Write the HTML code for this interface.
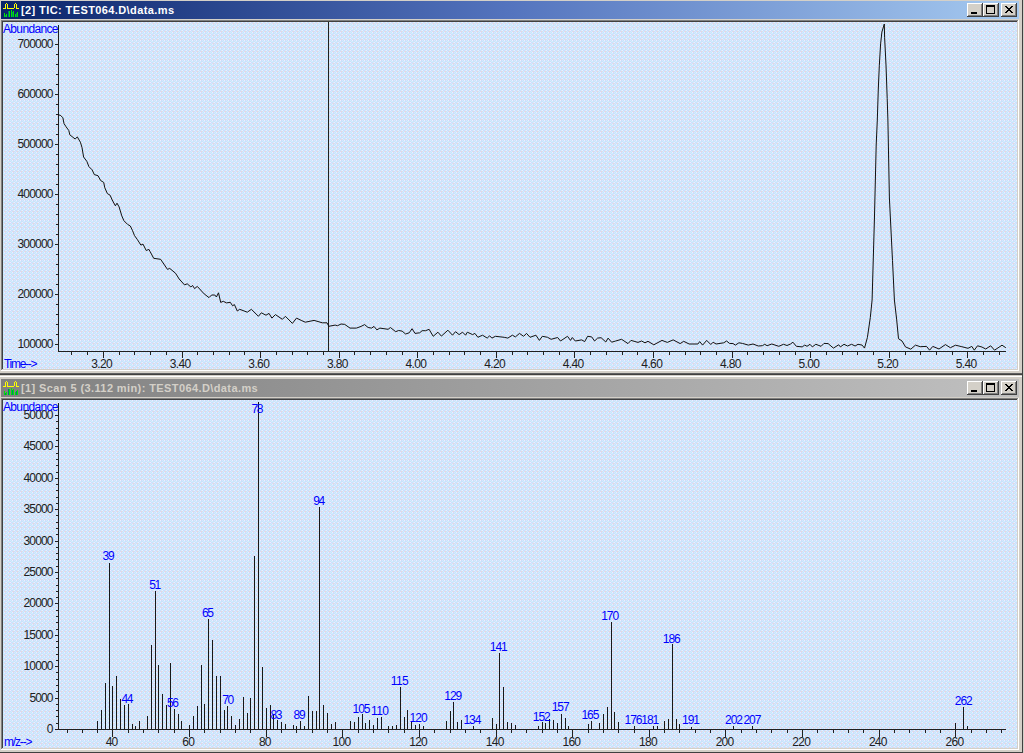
<!DOCTYPE html>
<html><head><meta charset="utf-8"><style>
html,body{margin:0;padding:0;width:1024px;height:753px;overflow:hidden;background:#D4D0C8}
svg{display:block;font-family:"Liberation Sans",sans-serif}
</style></head><body>
<svg width="1024" height="753" viewBox="0 0 1024 753" shape-rendering="crispEdges">
<defs>
<linearGradient id="gact" x1="0" x2="1" y1="0" y2="0"><stop offset="0" stop-color="#0A246A"/><stop offset="0.5" stop-color="#5474BE"/><stop offset="1" stop-color="#A6CAF0"/></linearGradient>
<linearGradient id="ginact" x1="0" x2="1" y1="0" y2="0"><stop offset="0" stop-color="#808080"/><stop offset="1" stop-color="#C0C0C0"/></linearGradient>
<pattern id="dith" x="0" y="0" width="4" height="4" patternUnits="userSpaceOnUse"><rect width="4" height="4" fill="#D0DAFC"/><rect x="0" y="0" width="1" height="1" fill="#ECEEFF"/><rect x="2" y="0" width="1" height="1" fill="#CCF4FA"/><rect x="0" y="1" width="1" height="1" fill="#CCF4FA"/><rect x="3" y="1" width="1" height="1" fill="#CCF4FA"/><rect x="1" y="2" width="1" height="1" fill="#CCF4FA"/><rect x="2" y="2" width="1" height="1" fill="#ECEEFF"/><rect x="1" y="3" width="1" height="1" fill="#F0D8D0"/><rect x="3" y="3" width="1" height="1" fill="#CCF4FA"/></pattern>
</defs>
<rect x="0" y="0" width="1024" height="753" fill="#D4D0C8"/>
<rect x="1022" y="0" width="1" height="753" fill="#404040"/>
<rect x="1" y="1" width="1018" height="18" fill="url(#gact)"/>
<rect x="1" y="19" width="1018" height="1" fill="#D4D0C8"/>
<rect x="1" y="20" width="1018" height="1" fill="#808080"/>
<rect x="1" y="20" width="1" height="350" fill="#808080"/>
<rect x="2" y="21" width="1016" height="1" fill="#404040"/>
<rect x="2" y="21" width="1" height="348" fill="#404040"/>
<rect x="1" y="370" width="1018" height="1" fill="#FFFFFF"/>
<rect x="1018" y="20" width="1" height="351" fill="#FFFFFF"/>
<rect x="2" y="369" width="1016" height="1" fill="#D4D0C8"/>
<rect x="1017" y="21" width="1" height="349" fill="#D4D0C8"/>
<rect x="3" y="22" width="1014" height="347" fill="url(#dith)"/>
<rect x="967" y="3" width="16" height="14" fill="#404040"/>
<rect x="967" y="3" width="15" height="13" fill="#FFFFFF"/>
<rect x="968" y="4" width="14" height="12" fill="#808080"/>
<rect x="968" y="4" width="13" height="11" fill="#D4D0C8"/>
<rect x="983" y="3" width="16" height="14" fill="#404040"/>
<rect x="983" y="3" width="15" height="13" fill="#FFFFFF"/>
<rect x="984" y="4" width="14" height="12" fill="#808080"/>
<rect x="984" y="4" width="13" height="11" fill="#D4D0C8"/>
<rect x="1001" y="3" width="16" height="14" fill="#404040"/>
<rect x="1001" y="3" width="15" height="13" fill="#FFFFFF"/>
<rect x="1002" y="4" width="14" height="12" fill="#808080"/>
<rect x="1002" y="4" width="13" height="11" fill="#D4D0C8"/>
<rect x="971" y="12" width="6" height="2" fill="#000"/>
<rect x="986" y="5" width="9" height="9" fill="#000"/>
<rect x="987" y="7" width="7" height="6" fill="#D4D0C8"/>
<rect x="1005" y="6" width="2" height="1" fill="#000"/>
<rect x="1011" y="6" width="2" height="1" fill="#000"/>
<rect x="1006" y="7" width="2" height="1" fill="#000"/>
<rect x="1010" y="7" width="2" height="1" fill="#000"/>
<rect x="1007" y="8" width="2" height="1" fill="#000"/>
<rect x="1009" y="8" width="2" height="1" fill="#000"/>
<rect x="1008" y="9" width="2" height="1" fill="#000"/>
<rect x="1008" y="9" width="2" height="1" fill="#000"/>
<rect x="1009" y="10" width="2" height="1" fill="#000"/>
<rect x="1007" y="10" width="2" height="1" fill="#000"/>
<rect x="1010" y="11" width="2" height="1" fill="#000"/>
<rect x="1006" y="11" width="2" height="1" fill="#000"/>
<rect x="1011" y="12" width="2" height="1" fill="#000"/>
<rect x="1005" y="12" width="2" height="1" fill="#000"/>
<rect x="3" y="8" width="3" height="1" fill="#FFFF00"/>
<rect x="5" y="4" width="1" height="4" fill="#FFFF00"/>
<rect x="6" y="3" width="1" height="1" fill="#FFFF00"/>
<rect x="7" y="4" width="1" height="4" fill="#FFFF00"/>
<rect x="7" y="8" width="7" height="1" fill="#FFFF00"/>
<rect x="14" y="4" width="1" height="4" fill="#FFFF00"/>
<rect x="15" y="3" width="1" height="1" fill="#FFFF00"/>
<rect x="16" y="4" width="1" height="4" fill="#FFFF00"/>
<rect x="16" y="8" width="3" height="1" fill="#FFFF00"/>
<rect x="4" y="13" width="1" height="4" fill="#00E800"/>
<rect x="5" y="15" width="1" height="2" fill="#008070"/>
<rect x="6" y="14" width="1" height="3" fill="#00E800"/>
<rect x="8" y="11" width="1" height="6" fill="#008070"/>
<rect x="9" y="11" width="1" height="6" fill="#00E800"/>
<rect x="11" y="10" width="1" height="7" fill="#00E800"/>
<rect x="12" y="12" width="1" height="5" fill="#008070"/>
<rect x="13" y="11" width="1" height="6" fill="#00E800"/>
<rect x="15" y="14" width="1" height="3" fill="#00E800"/>
<rect x="16" y="13" width="1" height="4" fill="#008070"/>
<rect x="17" y="12" width="1" height="5" fill="#00E800"/>
<text x="21" y="14" fill="#FFFFFF" text-anchor="start" font-size="11" font-weight="bold" letter-spacing="0.4">[2] TIC: TEST064.D\data.ms</text>
<rect x="0" y="371" width="1022" height="2" fill="#D4D0C8"/>
<rect x="0" y="373" width="1022" height="1" fill="#606060"/>
<rect x="0" y="374" width="1022" height="1" fill="#404040"/>
<rect x="0" y="375" width="1022" height="1" fill="#D4D0C8"/>
<rect x="0" y="376" width="1022" height="1" fill="#FFFFFF"/>
<rect x="0" y="377" width="1022" height="2" fill="#D4D0C8"/>
<rect x="1" y="379" width="1018" height="18" fill="url(#ginact)"/>
<rect x="1" y="397" width="1018" height="1" fill="#D4D0C8"/>
<rect x="1" y="398" width="1018" height="1" fill="#808080"/>
<rect x="1" y="398" width="1" height="351" fill="#808080"/>
<rect x="2" y="399" width="1016" height="1" fill="#404040"/>
<rect x="2" y="399" width="1" height="349" fill="#404040"/>
<rect x="1" y="749" width="1018" height="1" fill="#FFFFFF"/>
<rect x="1018" y="398" width="1" height="352" fill="#FFFFFF"/>
<rect x="2" y="748" width="1016" height="1" fill="#D4D0C8"/>
<rect x="1017" y="399" width="1" height="350" fill="#D4D0C8"/>
<rect x="3" y="400" width="1014" height="348" fill="url(#dith)"/>
<rect x="967" y="381" width="16" height="14" fill="#404040"/>
<rect x="967" y="381" width="15" height="13" fill="#FFFFFF"/>
<rect x="968" y="382" width="14" height="12" fill="#808080"/>
<rect x="968" y="382" width="13" height="11" fill="#D4D0C8"/>
<rect x="983" y="381" width="16" height="14" fill="#404040"/>
<rect x="983" y="381" width="15" height="13" fill="#FFFFFF"/>
<rect x="984" y="382" width="14" height="12" fill="#808080"/>
<rect x="984" y="382" width="13" height="11" fill="#D4D0C8"/>
<rect x="1001" y="381" width="16" height="14" fill="#404040"/>
<rect x="1001" y="381" width="15" height="13" fill="#FFFFFF"/>
<rect x="1002" y="382" width="14" height="12" fill="#808080"/>
<rect x="1002" y="382" width="13" height="11" fill="#D4D0C8"/>
<rect x="971" y="390" width="6" height="2" fill="#000"/>
<rect x="986" y="383" width="9" height="9" fill="#000"/>
<rect x="987" y="385" width="7" height="6" fill="#D4D0C8"/>
<rect x="1005" y="384" width="2" height="1" fill="#000"/>
<rect x="1011" y="384" width="2" height="1" fill="#000"/>
<rect x="1006" y="385" width="2" height="1" fill="#000"/>
<rect x="1010" y="385" width="2" height="1" fill="#000"/>
<rect x="1007" y="386" width="2" height="1" fill="#000"/>
<rect x="1009" y="386" width="2" height="1" fill="#000"/>
<rect x="1008" y="387" width="2" height="1" fill="#000"/>
<rect x="1008" y="387" width="2" height="1" fill="#000"/>
<rect x="1009" y="388" width="2" height="1" fill="#000"/>
<rect x="1007" y="388" width="2" height="1" fill="#000"/>
<rect x="1010" y="389" width="2" height="1" fill="#000"/>
<rect x="1006" y="389" width="2" height="1" fill="#000"/>
<rect x="1011" y="390" width="2" height="1" fill="#000"/>
<rect x="1005" y="390" width="2" height="1" fill="#000"/>
<rect x="3" y="386" width="3" height="1" fill="#FFFF00"/>
<rect x="5" y="382" width="1" height="4" fill="#FFFF00"/>
<rect x="6" y="381" width="1" height="1" fill="#FFFF00"/>
<rect x="7" y="382" width="1" height="4" fill="#FFFF00"/>
<rect x="7" y="386" width="7" height="1" fill="#FFFF00"/>
<rect x="14" y="382" width="1" height="4" fill="#FFFF00"/>
<rect x="15" y="381" width="1" height="1" fill="#FFFF00"/>
<rect x="16" y="382" width="1" height="4" fill="#FFFF00"/>
<rect x="16" y="386" width="3" height="1" fill="#FFFF00"/>
<rect x="4" y="391" width="1" height="4" fill="#00E800"/>
<rect x="5" y="393" width="1" height="2" fill="#008070"/>
<rect x="6" y="392" width="1" height="3" fill="#00E800"/>
<rect x="8" y="389" width="1" height="6" fill="#008070"/>
<rect x="9" y="389" width="1" height="6" fill="#00E800"/>
<rect x="11" y="388" width="1" height="7" fill="#00E800"/>
<rect x="12" y="390" width="1" height="5" fill="#008070"/>
<rect x="13" y="389" width="1" height="6" fill="#00E800"/>
<rect x="15" y="392" width="1" height="3" fill="#00E800"/>
<rect x="16" y="391" width="1" height="4" fill="#008070"/>
<rect x="17" y="390" width="1" height="5" fill="#00E800"/>
<text x="21" y="392" fill="#D4D0C8" text-anchor="start" font-size="11" font-weight="bold" letter-spacing="0.4">[1] Scan 5 (3.112 min): TEST064.D\data.ms</text>
<rect x="0" y="750" width="1022" height="2" fill="#D4D0C8"/>
<rect x="0" y="752" width="1022" height="1" fill="#404040"/>
<rect x="58" y="25" width="1" height="327" fill="#202020"/>
<rect x="58" y="351" width="948" height="1" fill="#202020"/>
<rect x="55" y="44" width="3" height="1" fill="#202020"/>
<text x="53.5" y="48" fill="#202020" text-anchor="end" font-size="12" font-weight="normal" textLength="36" lengthAdjust="spacing">700000</text>
<rect x="56" y="54" width="2" height="1" fill="#202020"/>
<rect x="56" y="64" width="2" height="1" fill="#202020"/>
<rect x="56" y="74" width="2" height="1" fill="#202020"/>
<rect x="56" y="84" width="2" height="1" fill="#202020"/>
<rect x="55" y="94" width="3" height="1" fill="#202020"/>
<text x="53.5" y="98" fill="#202020" text-anchor="end" font-size="12" font-weight="normal" textLength="36" lengthAdjust="spacing">600000</text>
<rect x="56" y="104" width="2" height="1" fill="#202020"/>
<rect x="56" y="114" width="2" height="1" fill="#202020"/>
<rect x="56" y="124" width="2" height="1" fill="#202020"/>
<rect x="56" y="134" width="2" height="1" fill="#202020"/>
<rect x="55" y="144" width="3" height="1" fill="#202020"/>
<text x="53.5" y="148" fill="#202020" text-anchor="end" font-size="12" font-weight="normal" textLength="36" lengthAdjust="spacing">500000</text>
<rect x="56" y="154" width="2" height="1" fill="#202020"/>
<rect x="56" y="164" width="2" height="1" fill="#202020"/>
<rect x="56" y="174" width="2" height="1" fill="#202020"/>
<rect x="56" y="184" width="2" height="1" fill="#202020"/>
<rect x="55" y="194" width="3" height="1" fill="#202020"/>
<text x="53.5" y="198" fill="#202020" text-anchor="end" font-size="12" font-weight="normal" textLength="36" lengthAdjust="spacing">400000</text>
<rect x="56" y="204" width="2" height="1" fill="#202020"/>
<rect x="56" y="214" width="2" height="1" fill="#202020"/>
<rect x="56" y="224" width="2" height="1" fill="#202020"/>
<rect x="56" y="234" width="2" height="1" fill="#202020"/>
<rect x="55" y="244" width="3" height="1" fill="#202020"/>
<text x="53.5" y="248" fill="#202020" text-anchor="end" font-size="12" font-weight="normal" textLength="36" lengthAdjust="spacing">300000</text>
<rect x="56" y="254" width="2" height="1" fill="#202020"/>
<rect x="56" y="264" width="2" height="1" fill="#202020"/>
<rect x="56" y="274" width="2" height="1" fill="#202020"/>
<rect x="56" y="284" width="2" height="1" fill="#202020"/>
<rect x="55" y="294" width="3" height="1" fill="#202020"/>
<text x="53.5" y="298" fill="#202020" text-anchor="end" font-size="12" font-weight="normal" textLength="36" lengthAdjust="spacing">200000</text>
<rect x="56" y="304" width="2" height="1" fill="#202020"/>
<rect x="56" y="314" width="2" height="1" fill="#202020"/>
<rect x="56" y="324" width="2" height="1" fill="#202020"/>
<rect x="56" y="334" width="2" height="1" fill="#202020"/>
<rect x="55" y="344" width="3" height="1" fill="#202020"/>
<text x="53.5" y="348" fill="#202020" text-anchor="end" font-size="12" font-weight="normal" textLength="36" lengthAdjust="spacing">100000</text>
<rect x="71" y="352" width="1" height="3" fill="#202020"/>
<rect x="87" y="352" width="1" height="3" fill="#202020"/>
<rect x="103" y="352" width="1" height="6" fill="#202020"/>
<text x="101.9" y="367.5" fill="#202020" text-anchor="middle" font-size="12" font-weight="normal" textLength="21.5" lengthAdjust="spacing">3.20</text>
<rect x="119" y="352" width="1" height="3" fill="#202020"/>
<rect x="134" y="352" width="1" height="3" fill="#202020"/>
<rect x="150" y="352" width="1" height="3" fill="#202020"/>
<rect x="166" y="352" width="1" height="3" fill="#202020"/>
<rect x="182" y="352" width="1" height="6" fill="#202020"/>
<text x="180.5" y="367.5" fill="#202020" text-anchor="middle" font-size="12" font-weight="normal" textLength="21.5" lengthAdjust="spacing">3.40</text>
<rect x="197" y="352" width="1" height="3" fill="#202020"/>
<rect x="213" y="352" width="1" height="3" fill="#202020"/>
<rect x="229" y="352" width="1" height="3" fill="#202020"/>
<rect x="244" y="352" width="1" height="3" fill="#202020"/>
<rect x="260" y="352" width="1" height="6" fill="#202020"/>
<text x="259.1" y="367.5" fill="#202020" text-anchor="middle" font-size="12" font-weight="normal" textLength="21.5" lengthAdjust="spacing">3.60</text>
<rect x="276" y="352" width="1" height="3" fill="#202020"/>
<rect x="292" y="352" width="1" height="3" fill="#202020"/>
<rect x="307" y="352" width="1" height="3" fill="#202020"/>
<rect x="323" y="352" width="1" height="3" fill="#202020"/>
<rect x="339" y="352" width="1" height="6" fill="#202020"/>
<text x="337.7" y="367.5" fill="#202020" text-anchor="middle" font-size="12" font-weight="normal" textLength="21.5" lengthAdjust="spacing">3.80</text>
<rect x="354" y="352" width="1" height="3" fill="#202020"/>
<rect x="370" y="352" width="1" height="3" fill="#202020"/>
<rect x="386" y="352" width="1" height="3" fill="#202020"/>
<rect x="402" y="352" width="1" height="3" fill="#202020"/>
<rect x="417" y="352" width="1" height="6" fill="#202020"/>
<text x="416.29999999999995" y="367.5" fill="#202020" text-anchor="middle" font-size="12" font-weight="normal" textLength="21.5" lengthAdjust="spacing">4.00</text>
<rect x="433" y="352" width="1" height="3" fill="#202020"/>
<rect x="449" y="352" width="1" height="3" fill="#202020"/>
<rect x="464" y="352" width="1" height="3" fill="#202020"/>
<rect x="480" y="352" width="1" height="3" fill="#202020"/>
<rect x="496" y="352" width="1" height="6" fill="#202020"/>
<text x="494.9" y="367.5" fill="#202020" text-anchor="middle" font-size="12" font-weight="normal" textLength="21.5" lengthAdjust="spacing">4.20</text>
<rect x="512" y="352" width="1" height="3" fill="#202020"/>
<rect x="527" y="352" width="1" height="3" fill="#202020"/>
<rect x="543" y="352" width="1" height="3" fill="#202020"/>
<rect x="559" y="352" width="1" height="3" fill="#202020"/>
<rect x="574" y="352" width="1" height="6" fill="#202020"/>
<text x="573.5" y="367.5" fill="#202020" text-anchor="middle" font-size="12" font-weight="normal" textLength="21.5" lengthAdjust="spacing">4.40</text>
<rect x="590" y="352" width="1" height="3" fill="#202020"/>
<rect x="606" y="352" width="1" height="3" fill="#202020"/>
<rect x="622" y="352" width="1" height="3" fill="#202020"/>
<rect x="637" y="352" width="1" height="3" fill="#202020"/>
<rect x="653" y="352" width="1" height="6" fill="#202020"/>
<text x="652.0999999999999" y="367.5" fill="#202020" text-anchor="middle" font-size="12" font-weight="normal" textLength="21.5" lengthAdjust="spacing">4.60</text>
<rect x="669" y="352" width="1" height="3" fill="#202020"/>
<rect x="685" y="352" width="1" height="3" fill="#202020"/>
<rect x="700" y="352" width="1" height="3" fill="#202020"/>
<rect x="716" y="352" width="1" height="3" fill="#202020"/>
<rect x="732" y="352" width="1" height="6" fill="#202020"/>
<text x="730.6999999999999" y="367.5" fill="#202020" text-anchor="middle" font-size="12" font-weight="normal" textLength="21.5" lengthAdjust="spacing">4.80</text>
<rect x="747" y="352" width="1" height="3" fill="#202020"/>
<rect x="763" y="352" width="1" height="3" fill="#202020"/>
<rect x="779" y="352" width="1" height="3" fill="#202020"/>
<rect x="795" y="352" width="1" height="3" fill="#202020"/>
<rect x="810" y="352" width="1" height="6" fill="#202020"/>
<text x="809.3" y="367.5" fill="#202020" text-anchor="middle" font-size="12" font-weight="normal" textLength="21.5" lengthAdjust="spacing">5.00</text>
<rect x="826" y="352" width="1" height="3" fill="#202020"/>
<rect x="842" y="352" width="1" height="3" fill="#202020"/>
<rect x="857" y="352" width="1" height="3" fill="#202020"/>
<rect x="873" y="352" width="1" height="3" fill="#202020"/>
<rect x="889" y="352" width="1" height="6" fill="#202020"/>
<text x="887.9" y="367.5" fill="#202020" text-anchor="middle" font-size="12" font-weight="normal" textLength="21.5" lengthAdjust="spacing">5.20</text>
<rect x="905" y="352" width="1" height="3" fill="#202020"/>
<rect x="920" y="352" width="1" height="3" fill="#202020"/>
<rect x="936" y="352" width="1" height="3" fill="#202020"/>
<rect x="952" y="352" width="1" height="3" fill="#202020"/>
<rect x="967" y="352" width="1" height="6" fill="#202020"/>
<text x="966.4999999999999" y="367.5" fill="#202020" text-anchor="middle" font-size="12" font-weight="normal" textLength="21.5" lengthAdjust="spacing">5.40</text>
<rect x="983" y="352" width="1" height="3" fill="#202020"/>
<rect x="999" y="352" width="1" height="3" fill="#202020"/>
<text x="4" y="367.5" fill="#0000FF" text-anchor="start" font-size="12" font-weight="normal" textLength="33.5" lengthAdjust="spacing">Time--&gt;</text>
<text x="3" y="32.5" fill="#0000FF" text-anchor="start" font-size="12" font-weight="normal" textLength="55.5" lengthAdjust="spacing">Abundance</text>
<rect x="328" y="22" width="1" height="330" fill="#202020"/>
<path d="M58.1,114.6 L60.8,115.6 L62.9,117.8 L64.0,123.6 L66.1,126.8 L68.8,130.5 L69.8,134.8 L75.1,139.0 L77.3,136.9 L80.4,142.2 L82.0,147.5 L83.6,157.0 L86.8,161.3 L88.9,166.6 L92.1,169.8 L94.3,174.6 L98.0,175.7 L100.6,180.5 L103.7,182.4 L104.8,187.8 L107.4,193.6 L110.1,195.2 L112.2,200.0 L115.4,205.8 L117.0,203.2 L119.1,206.9 L121.8,215.9 L123.9,220.7 L127.6,224.4 L130.3,226.0 L132.4,230.3 L134.5,235.6 L137.2,239.3 L140.9,245.1 L143.0,244.1 L146.2,250.5 L148.9,249.4 L150.0,251.4 L153.7,258.3 L160.6,259.3 L167.5,269.4 L169.7,268.4 L175.5,273.2 L179.2,279.0 L184.5,284.9 L187.2,283.8 L190.9,287.0 L192.5,285.4 L194.6,288.6 L197.3,286.4 L204.2,293.9 L209.0,297.6 L211.6,295.0 L214.8,295.0 L216.4,297.0 L218.5,292.8 L220.7,302.4 L223.3,301.3 L226.5,302.9 L230.3,302.3 L232.6,305.8 L234.4,304.6 L237.3,311.0 L239.7,309.3 L247.3,312.2 L251.4,309.3 L258.4,316.3 L261.3,312.8 L266.0,315.2 L269.0,313.4 L271.9,318.1 L275.4,314.6 L282.4,319.3 L285.4,316.3 L292.4,323.4 L296.5,318.1 L301.2,320.4 L305.3,322.2 L314.1,320.4 L322.3,322.8 L327.0,322.8 L328.8,326.3 L335.2,325.1 L337.5,325.7 L341.1,324.0 L344.7,324.4 L350.0,328.1 L356.4,328.1 L361.1,326.4 L364.6,324.6 L368.1,327.5 L371.7,328.1 L374.0,326.4 L376.9,329.9 L379.9,328.1 L388.1,329.3 L390.4,327.5 L395.7,331.7 L398.6,330.5 L402.1,331.1 L405.6,334.0 L409.2,332.8 L412.1,328.7 L415.0,333.4 L419.7,332.8 L422.1,330.7 L425.6,330.7 L429.1,329.3 L433.2,336.3 L437.9,332.2 L441.4,336.1 L447.9,330.2 L452.5,335.2 L455.5,331.7 L459.1,334.6 L462.6,332.2 L465.6,335.2 L467.3,332.2 L472.6,334.6 L474.9,333.4 L477.9,337.3 L482.5,335.2 L487.2,338.1 L489.6,335.8 L491.9,338.1 L495.4,336.3 L504.2,337.3 L507.8,338.1 L512.4,335.2 L515.4,336.9 L519.5,333.4 L523.6,336.3 L526.5,333.4 L530.0,337.3 L535.9,335.2 L539.4,340.4 L542.3,336.3 L547.6,337.3 L551.1,339.3 L557.6,337.5 L560.5,341.0 L567.5,336.3 L570.5,340.4 L572.3,337.5 L575.3,341.0 L581.7,339.9 L584.7,341.6 L587.6,336.3 L591.7,336.9 L594.6,341.0 L597.6,338.1 L601.1,337.7 L605.8,342.0 L608.1,338.1 L611.6,342.2 L615.7,341.0 L621.6,339.3 L628.0,343.6 L631.0,340.4 L638.0,342.4 L641.5,341.0 L645.0,342.8 L648.0,341.3 L653.8,344.8 L662.0,340.4 L667.3,342.4 L673.2,339.9 L680.2,343.6 L683.7,341.3 L689.1,344.0 L697.9,344.0 L699.7,341.6 L702.6,345.1 L706.7,340.4 L710.8,344.5 L713.1,342.2 L716.1,344.0 L723.7,342.8 L726.6,341.0 L729.5,343.4 L733.1,343.6 L735.4,345.1 L738.9,342.8 L742.4,343.4 L748.3,345.1 L753.0,344.0 L758.3,346.0 L762.4,345.7 L764.7,344.3 L767.1,345.7 L771.8,344.0 L778.8,346.3 L783.5,344.3 L787.0,345.5 L790.5,344.0 L792.9,342.2 L796.4,346.3 L802.2,346.9 L804.7,345.1 L807.0,346.3 L810.0,344.3 L812.3,346.9 L815.8,344.3 L821.1,346.3 L824.0,343.4 L828.1,343.6 L833.4,348.1 L838.7,344.8 L840.4,346.9 L844.0,344.3 L847.5,346.0 L851.6,344.3 L855.1,346.0 L858.0,344.3 L862.1,345.1 L864.5,348.1 L867.4,337.5 L870.3,317.6 L872.1,300.0 L874.4,220.0 L876.2,145.0 L877.3,120.0 L878.3,89.0 L879.3,65.8 L880.6,43.9 L881.9,32.0 L884.3,24.0 L884.6,37.3 L886.0,65.0 L887.2,98.4 L887.9,120.0 L889.4,198.0 L892.5,260.6 L894.4,300.0 L896.7,319.9 L898.5,338.7 L902.0,341.0 L905.5,346.9 L910.8,349.2 L915.5,345.1 L920.2,346.7 L926.5,346.4 L929.6,350.2 L932.8,346.4 L939.0,349.0 L945.4,344.6 L950.4,347.7 L955.5,345.2 L961.8,346.7 L968.0,348.3 L971.8,346.4 L974.3,350.2 L977.5,345.8 L981.9,347.0 L985.7,349.0 L990.7,345.8 L994.5,350.2 L1002.0,345.2 L1005.8,347.7" stroke="#101010" stroke-width="1" fill="none" shape-rendering="auto"/>
<rect x="58" y="403" width="1" height="327" fill="#202020"/>
<rect x="58" y="729" width="948" height="1" fill="#202020"/>
<rect x="55" y="729" width="3" height="1" fill="#202020"/>
<text x="53.5" y="733" fill="#202020" text-anchor="end" font-size="12" font-weight="normal" >0</text>
<rect x="56" y="723" width="2" height="1" fill="#202020"/>
<rect x="56" y="716" width="2" height="1" fill="#202020"/>
<rect x="56" y="710" width="2" height="1" fill="#202020"/>
<rect x="56" y="704" width="2" height="1" fill="#202020"/>
<rect x="55" y="698" width="3" height="1" fill="#202020"/>
<text x="53.5" y="702" fill="#202020" text-anchor="end" font-size="12" font-weight="normal" textLength="24" lengthAdjust="spacing">5000</text>
<rect x="56" y="691" width="2" height="1" fill="#202020"/>
<rect x="56" y="685" width="2" height="1" fill="#202020"/>
<rect x="56" y="679" width="2" height="1" fill="#202020"/>
<rect x="56" y="672" width="2" height="1" fill="#202020"/>
<rect x="55" y="666" width="3" height="1" fill="#202020"/>
<text x="53.5" y="670" fill="#202020" text-anchor="end" font-size="12" font-weight="normal" textLength="30" lengthAdjust="spacing">10000</text>
<rect x="56" y="660" width="2" height="1" fill="#202020"/>
<rect x="56" y="654" width="2" height="1" fill="#202020"/>
<rect x="56" y="647" width="2" height="1" fill="#202020"/>
<rect x="56" y="641" width="2" height="1" fill="#202020"/>
<rect x="55" y="635" width="3" height="1" fill="#202020"/>
<text x="53.5" y="639" fill="#202020" text-anchor="end" font-size="12" font-weight="normal" textLength="30" lengthAdjust="spacing">15000</text>
<rect x="56" y="629" width="2" height="1" fill="#202020"/>
<rect x="56" y="622" width="2" height="1" fill="#202020"/>
<rect x="56" y="616" width="2" height="1" fill="#202020"/>
<rect x="56" y="610" width="2" height="1" fill="#202020"/>
<rect x="55" y="603" width="3" height="1" fill="#202020"/>
<text x="53.5" y="607" fill="#202020" text-anchor="end" font-size="12" font-weight="normal" textLength="30" lengthAdjust="spacing">20000</text>
<rect x="56" y="597" width="2" height="1" fill="#202020"/>
<rect x="56" y="591" width="2" height="1" fill="#202020"/>
<rect x="56" y="585" width="2" height="1" fill="#202020"/>
<rect x="56" y="578" width="2" height="1" fill="#202020"/>
<rect x="55" y="572" width="3" height="1" fill="#202020"/>
<text x="53.5" y="576" fill="#202020" text-anchor="end" font-size="12" font-weight="normal" textLength="30" lengthAdjust="spacing">25000</text>
<rect x="56" y="566" width="2" height="1" fill="#202020"/>
<rect x="56" y="559" width="2" height="1" fill="#202020"/>
<rect x="56" y="553" width="2" height="1" fill="#202020"/>
<rect x="56" y="547" width="2" height="1" fill="#202020"/>
<rect x="55" y="541" width="3" height="1" fill="#202020"/>
<text x="53.5" y="545" fill="#202020" text-anchor="end" font-size="12" font-weight="normal" textLength="30" lengthAdjust="spacing">30000</text>
<rect x="56" y="534" width="2" height="1" fill="#202020"/>
<rect x="56" y="528" width="2" height="1" fill="#202020"/>
<rect x="56" y="522" width="2" height="1" fill="#202020"/>
<rect x="56" y="515" width="2" height="1" fill="#202020"/>
<rect x="55" y="509" width="3" height="1" fill="#202020"/>
<text x="53.5" y="513" fill="#202020" text-anchor="end" font-size="12" font-weight="normal" textLength="30" lengthAdjust="spacing">35000</text>
<rect x="56" y="503" width="2" height="1" fill="#202020"/>
<rect x="56" y="497" width="2" height="1" fill="#202020"/>
<rect x="56" y="490" width="2" height="1" fill="#202020"/>
<rect x="56" y="484" width="2" height="1" fill="#202020"/>
<rect x="55" y="478" width="3" height="1" fill="#202020"/>
<text x="53.5" y="482" fill="#202020" text-anchor="end" font-size="12" font-weight="normal" textLength="30" lengthAdjust="spacing">40000</text>
<rect x="56" y="472" width="2" height="1" fill="#202020"/>
<rect x="56" y="465" width="2" height="1" fill="#202020"/>
<rect x="56" y="459" width="2" height="1" fill="#202020"/>
<rect x="56" y="453" width="2" height="1" fill="#202020"/>
<rect x="55" y="446" width="3" height="1" fill="#202020"/>
<text x="53.5" y="450" fill="#202020" text-anchor="end" font-size="12" font-weight="normal" textLength="30" lengthAdjust="spacing">45000</text>
<rect x="56" y="440" width="2" height="1" fill="#202020"/>
<rect x="56" y="434" width="2" height="1" fill="#202020"/>
<rect x="56" y="428" width="2" height="1" fill="#202020"/>
<rect x="56" y="421" width="2" height="1" fill="#202020"/>
<rect x="55" y="415" width="3" height="1" fill="#202020"/>
<text x="53.5" y="419" fill="#202020" text-anchor="end" font-size="12" font-weight="normal" textLength="30" lengthAdjust="spacing">50000</text>
<rect x="67" y="730" width="1" height="3" fill="#202020"/>
<rect x="82" y="730" width="1" height="3" fill="#202020"/>
<rect x="97" y="730" width="1" height="3" fill="#202020"/>
<rect x="112" y="730" width="1" height="7" fill="#202020"/>
<text x="112.0" y="746" fill="#202020" text-anchor="middle" font-size="12" font-weight="normal" textLength="12.5" lengthAdjust="spacing">40</text>
<rect x="128" y="730" width="1" height="3" fill="#202020"/>
<rect x="143" y="730" width="1" height="3" fill="#202020"/>
<rect x="158" y="730" width="1" height="3" fill="#202020"/>
<rect x="174" y="730" width="1" height="3" fill="#202020"/>
<rect x="189" y="730" width="1" height="7" fill="#202020"/>
<text x="188.62" y="746" fill="#202020" text-anchor="middle" font-size="12" font-weight="normal" textLength="12.5" lengthAdjust="spacing">60</text>
<rect x="204" y="730" width="1" height="3" fill="#202020"/>
<rect x="220" y="730" width="1" height="3" fill="#202020"/>
<rect x="235" y="730" width="1" height="3" fill="#202020"/>
<rect x="250" y="730" width="1" height="3" fill="#202020"/>
<rect x="266" y="730" width="1" height="7" fill="#202020"/>
<text x="265.24" y="746" fill="#202020" text-anchor="middle" font-size="12" font-weight="normal" textLength="12.5" lengthAdjust="spacing">80</text>
<rect x="281" y="730" width="1" height="3" fill="#202020"/>
<rect x="296" y="730" width="1" height="3" fill="#202020"/>
<rect x="312" y="730" width="1" height="3" fill="#202020"/>
<rect x="327" y="730" width="1" height="3" fill="#202020"/>
<rect x="342" y="730" width="1" height="7" fill="#202020"/>
<text x="341.86" y="746" fill="#202020" text-anchor="middle" font-size="12" font-weight="normal" textLength="18.5" lengthAdjust="spacing">100</text>
<rect x="358" y="730" width="1" height="3" fill="#202020"/>
<rect x="373" y="730" width="1" height="3" fill="#202020"/>
<rect x="388" y="730" width="1" height="3" fill="#202020"/>
<rect x="404" y="730" width="1" height="3" fill="#202020"/>
<rect x="419" y="730" width="1" height="7" fill="#202020"/>
<text x="418.48" y="746" fill="#202020" text-anchor="middle" font-size="12" font-weight="normal" textLength="18.5" lengthAdjust="spacing">120</text>
<rect x="434" y="730" width="1" height="3" fill="#202020"/>
<rect x="450" y="730" width="1" height="3" fill="#202020"/>
<rect x="465" y="730" width="1" height="3" fill="#202020"/>
<rect x="480" y="730" width="1" height="3" fill="#202020"/>
<rect x="496" y="730" width="1" height="7" fill="#202020"/>
<text x="495.1" y="746" fill="#202020" text-anchor="middle" font-size="12" font-weight="normal" textLength="18.5" lengthAdjust="spacing">140</text>
<rect x="511" y="730" width="1" height="3" fill="#202020"/>
<rect x="526" y="730" width="1" height="3" fill="#202020"/>
<rect x="542" y="730" width="1" height="3" fill="#202020"/>
<rect x="557" y="730" width="1" height="3" fill="#202020"/>
<rect x="572" y="730" width="1" height="7" fill="#202020"/>
<text x="571.72" y="746" fill="#202020" text-anchor="middle" font-size="12" font-weight="normal" textLength="18.5" lengthAdjust="spacing">160</text>
<rect x="588" y="730" width="1" height="3" fill="#202020"/>
<rect x="603" y="730" width="1" height="3" fill="#202020"/>
<rect x="618" y="730" width="1" height="3" fill="#202020"/>
<rect x="634" y="730" width="1" height="3" fill="#202020"/>
<rect x="649" y="730" width="1" height="7" fill="#202020"/>
<text x="648.34" y="746" fill="#202020" text-anchor="middle" font-size="12" font-weight="normal" textLength="18.5" lengthAdjust="spacing">180</text>
<rect x="664" y="730" width="1" height="3" fill="#202020"/>
<rect x="679" y="730" width="1" height="3" fill="#202020"/>
<rect x="695" y="730" width="1" height="3" fill="#202020"/>
<rect x="710" y="730" width="1" height="3" fill="#202020"/>
<rect x="725" y="730" width="1" height="7" fill="#202020"/>
<text x="724.96" y="746" fill="#202020" text-anchor="middle" font-size="12" font-weight="normal" textLength="18.5" lengthAdjust="spacing">200</text>
<rect x="741" y="730" width="1" height="3" fill="#202020"/>
<rect x="756" y="730" width="1" height="3" fill="#202020"/>
<rect x="771" y="730" width="1" height="3" fill="#202020"/>
<rect x="787" y="730" width="1" height="3" fill="#202020"/>
<rect x="802" y="730" width="1" height="7" fill="#202020"/>
<text x="801.58" y="746" fill="#202020" text-anchor="middle" font-size="12" font-weight="normal" textLength="18.5" lengthAdjust="spacing">220</text>
<rect x="817" y="730" width="1" height="3" fill="#202020"/>
<rect x="833" y="730" width="1" height="3" fill="#202020"/>
<rect x="848" y="730" width="1" height="3" fill="#202020"/>
<rect x="863" y="730" width="1" height="3" fill="#202020"/>
<rect x="879" y="730" width="1" height="7" fill="#202020"/>
<text x="878.2" y="746" fill="#202020" text-anchor="middle" font-size="12" font-weight="normal" textLength="18.5" lengthAdjust="spacing">240</text>
<rect x="894" y="730" width="1" height="3" fill="#202020"/>
<rect x="909" y="730" width="1" height="3" fill="#202020"/>
<rect x="925" y="730" width="1" height="3" fill="#202020"/>
<rect x="940" y="730" width="1" height="3" fill="#202020"/>
<rect x="955" y="730" width="1" height="7" fill="#202020"/>
<text x="954.82" y="746" fill="#202020" text-anchor="middle" font-size="12" font-weight="normal" textLength="18.5" lengthAdjust="spacing">260</text>
<rect x="971" y="730" width="1" height="3" fill="#202020"/>
<rect x="986" y="730" width="1" height="3" fill="#202020"/>
<rect x="1001" y="730" width="1" height="3" fill="#202020"/>
<text x="4" y="746" fill="#0000FF" text-anchor="start" font-size="12" font-weight="normal" textLength="28.5" lengthAdjust="spacing">m/z--&gt;</text>
<text x="3" y="411" fill="#0000FF" text-anchor="start" font-size="12" font-weight="normal" textLength="55.5" lengthAdjust="spacing">Abundance</text>
<rect x="97" y="721" width="1" height="8" fill="#181818"/>
<rect x="101" y="710" width="1" height="19" fill="#181818"/>
<rect x="105" y="683" width="1" height="46" fill="#181818"/>
<rect x="109" y="563" width="1" height="166" fill="#181818"/>
<rect x="112" y="686" width="1" height="43" fill="#181818"/>
<rect x="116" y="676" width="1" height="53" fill="#181818"/>
<rect x="120" y="699" width="1" height="30" fill="#181818"/>
<rect x="124" y="705" width="1" height="24" fill="#181818"/>
<rect x="128" y="704" width="1" height="25" fill="#181818"/>
<rect x="132" y="724" width="1" height="5" fill="#181818"/>
<rect x="135" y="726" width="1" height="3" fill="#181818"/>
<rect x="139" y="721" width="1" height="8" fill="#181818"/>
<rect x="147" y="716" width="1" height="13" fill="#181818"/>
<rect x="151" y="645" width="1" height="84" fill="#181818"/>
<rect x="155" y="591" width="1" height="138" fill="#181818"/>
<rect x="158" y="665" width="1" height="64" fill="#181818"/>
<rect x="162" y="694" width="1" height="35" fill="#181818"/>
<rect x="166" y="705" width="1" height="24" fill="#181818"/>
<rect x="170" y="663" width="1" height="66" fill="#181818"/>
<rect x="174" y="709" width="1" height="20" fill="#181818"/>
<rect x="178" y="714" width="1" height="15" fill="#181818"/>
<rect x="181" y="721" width="1" height="8" fill="#181818"/>
<rect x="189" y="725" width="1" height="4" fill="#181818"/>
<rect x="193" y="716" width="1" height="13" fill="#181818"/>
<rect x="197" y="706" width="1" height="23" fill="#181818"/>
<rect x="201" y="665" width="1" height="64" fill="#181818"/>
<rect x="204" y="704" width="1" height="25" fill="#181818"/>
<rect x="208" y="619" width="1" height="110" fill="#181818"/>
<rect x="212" y="640" width="1" height="89" fill="#181818"/>
<rect x="216" y="676" width="1" height="53" fill="#181818"/>
<rect x="220" y="676" width="1" height="53" fill="#181818"/>
<rect x="224" y="710" width="1" height="19" fill="#181818"/>
<rect x="227" y="706" width="1" height="23" fill="#181818"/>
<rect x="231" y="716" width="1" height="13" fill="#181818"/>
<rect x="235" y="725" width="1" height="4" fill="#181818"/>
<rect x="239" y="719" width="1" height="10" fill="#181818"/>
<rect x="243" y="697" width="1" height="32" fill="#181818"/>
<rect x="247" y="713" width="1" height="16" fill="#181818"/>
<rect x="250" y="698" width="1" height="31" fill="#181818"/>
<rect x="254" y="556" width="1" height="173" fill="#181818"/>
<rect x="258" y="402" width="1" height="327" fill="#181818"/>
<rect x="262" y="667" width="1" height="62" fill="#181818"/>
<rect x="266" y="708" width="1" height="21" fill="#181818"/>
<rect x="270" y="705" width="1" height="24" fill="#181818"/>
<rect x="273" y="714" width="1" height="15" fill="#181818"/>
<rect x="277" y="720" width="1" height="9" fill="#181818"/>
<rect x="281" y="722" width="1" height="7" fill="#181818"/>
<rect x="285" y="724" width="1" height="5" fill="#181818"/>
<rect x="293" y="725" width="1" height="4" fill="#181818"/>
<rect x="296" y="726" width="1" height="3" fill="#181818"/>
<rect x="300" y="721" width="1" height="8" fill="#181818"/>
<rect x="304" y="726" width="1" height="3" fill="#181818"/>
<rect x="308" y="696" width="1" height="33" fill="#181818"/>
<rect x="312" y="711" width="1" height="18" fill="#181818"/>
<rect x="316" y="711" width="1" height="18" fill="#181818"/>
<rect x="319" y="507" width="1" height="222" fill="#181818"/>
<rect x="323" y="705" width="1" height="24" fill="#181818"/>
<rect x="327" y="713" width="1" height="16" fill="#181818"/>
<rect x="331" y="724" width="1" height="5" fill="#181818"/>
<rect x="335" y="722" width="1" height="7" fill="#181818"/>
<rect x="350" y="721" width="1" height="8" fill="#181818"/>
<rect x="354" y="722" width="1" height="7" fill="#181818"/>
<rect x="358" y="717" width="1" height="12" fill="#181818"/>
<rect x="362" y="714" width="1" height="15" fill="#181818"/>
<rect x="365" y="723" width="1" height="6" fill="#181818"/>
<rect x="369" y="720" width="1" height="9" fill="#181818"/>
<rect x="373" y="725" width="1" height="4" fill="#181818"/>
<rect x="377" y="718" width="1" height="11" fill="#181818"/>
<rect x="381" y="717" width="1" height="12" fill="#181818"/>
<rect x="388" y="726" width="1" height="3" fill="#181818"/>
<rect x="392" y="726" width="1" height="3" fill="#181818"/>
<rect x="396" y="725" width="1" height="4" fill="#181818"/>
<rect x="400" y="687" width="1" height="42" fill="#181818"/>
<rect x="404" y="717" width="1" height="12" fill="#181818"/>
<rect x="407" y="710" width="1" height="19" fill="#181818"/>
<rect x="411" y="722" width="1" height="7" fill="#181818"/>
<rect x="415" y="725" width="1" height="4" fill="#181818"/>
<rect x="419" y="724" width="1" height="5" fill="#181818"/>
<rect x="423" y="726" width="1" height="3" fill="#181818"/>
<rect x="446" y="721" width="1" height="8" fill="#181818"/>
<rect x="450" y="711" width="1" height="18" fill="#181818"/>
<rect x="453" y="702" width="1" height="27" fill="#181818"/>
<rect x="457" y="722" width="1" height="7" fill="#181818"/>
<rect x="461" y="720" width="1" height="9" fill="#181818"/>
<rect x="473" y="726" width="1" height="3" fill="#181818"/>
<rect x="492" y="718" width="1" height="11" fill="#181818"/>
<rect x="496" y="724" width="1" height="5" fill="#181818"/>
<rect x="499" y="653" width="1" height="76" fill="#181818"/>
<rect x="503" y="687" width="1" height="42" fill="#181818"/>
<rect x="507" y="722" width="1" height="7" fill="#181818"/>
<rect x="511" y="723" width="1" height="6" fill="#181818"/>
<rect x="515" y="725" width="1" height="4" fill="#181818"/>
<rect x="538" y="726" width="1" height="3" fill="#181818"/>
<rect x="542" y="722" width="1" height="7" fill="#181818"/>
<rect x="545" y="723" width="1" height="6" fill="#181818"/>
<rect x="549" y="719" width="1" height="10" fill="#181818"/>
<rect x="553" y="720" width="1" height="9" fill="#181818"/>
<rect x="557" y="723" width="1" height="6" fill="#181818"/>
<rect x="561" y="714" width="1" height="15" fill="#181818"/>
<rect x="565" y="718" width="1" height="11" fill="#181818"/>
<rect x="568" y="726" width="1" height="3" fill="#181818"/>
<rect x="588" y="724" width="1" height="5" fill="#181818"/>
<rect x="591" y="721" width="1" height="8" fill="#181818"/>
<rect x="599" y="723" width="1" height="6" fill="#181818"/>
<rect x="603" y="714" width="1" height="15" fill="#181818"/>
<rect x="607" y="707" width="1" height="22" fill="#181818"/>
<rect x="611" y="622" width="1" height="107" fill="#181818"/>
<rect x="614" y="712" width="1" height="17" fill="#181818"/>
<rect x="618" y="722" width="1" height="7" fill="#181818"/>
<rect x="634" y="726" width="1" height="3" fill="#181818"/>
<rect x="653" y="726" width="1" height="3" fill="#181818"/>
<rect x="657" y="726" width="1" height="3" fill="#181818"/>
<rect x="664" y="721" width="1" height="8" fill="#181818"/>
<rect x="668" y="719" width="1" height="10" fill="#181818"/>
<rect x="672" y="644" width="1" height="85" fill="#181818"/>
<rect x="676" y="719" width="1" height="10" fill="#181818"/>
<rect x="679" y="724" width="1" height="5" fill="#181818"/>
<rect x="691" y="727" width="1" height="2" fill="#181818"/>
<rect x="733" y="726" width="1" height="3" fill="#181818"/>
<rect x="752" y="726" width="1" height="3" fill="#181818"/>
<rect x="955" y="723" width="1" height="6" fill="#181818"/>
<rect x="963" y="707" width="1" height="22" fill="#181818"/>
<rect x="967" y="726" width="1" height="3" fill="#181818"/>
<text x="108.6" y="560" fill="#0000FF" text-anchor="middle" font-size="12" font-weight="normal" textLength="12" lengthAdjust="spacing">39</text>
<text x="155.3" y="589" fill="#0000FF" text-anchor="middle" font-size="12" font-weight="normal" textLength="12" lengthAdjust="spacing">51</text>
<text x="127.5" y="703" fill="#0000FF" text-anchor="middle" font-size="12" font-weight="normal" textLength="12" lengthAdjust="spacing">44</text>
<text x="173" y="707" fill="#0000FF" text-anchor="middle" font-size="12" font-weight="normal" textLength="12" lengthAdjust="spacing">56</text>
<text x="208" y="617" fill="#0000FF" text-anchor="middle" font-size="12" font-weight="normal" textLength="12" lengthAdjust="spacing">65</text>
<text x="228.3" y="704" fill="#0000FF" text-anchor="middle" font-size="12" font-weight="normal" textLength="12" lengthAdjust="spacing">70</text>
<text x="276.5" y="719" fill="#0000FF" text-anchor="middle" font-size="12" font-weight="normal" textLength="12" lengthAdjust="spacing">83</text>
<text x="257.5" y="413" fill="#0000FF" text-anchor="middle" font-size="12" font-weight="normal" textLength="12" lengthAdjust="spacing">78</text>
<text x="319.2" y="505" fill="#0000FF" text-anchor="middle" font-size="12" font-weight="normal" textLength="12" lengthAdjust="spacing">94</text>
<text x="299.6" y="719" fill="#0000FF" text-anchor="middle" font-size="12" font-weight="normal" textLength="12" lengthAdjust="spacing">89</text>
<text x="361.5" y="713" fill="#0000FF" text-anchor="middle" font-size="12" font-weight="normal" textLength="18" lengthAdjust="spacing">105</text>
<text x="380" y="715" fill="#0000FF" text-anchor="middle" font-size="12" font-weight="normal" textLength="18" lengthAdjust="spacing">110</text>
<text x="399.8" y="685" fill="#0000FF" text-anchor="middle" font-size="12" font-weight="normal" textLength="18" lengthAdjust="spacing">115</text>
<text x="418.6" y="722" fill="#0000FF" text-anchor="middle" font-size="12" font-weight="normal" textLength="18" lengthAdjust="spacing">120</text>
<text x="453.3" y="700" fill="#0000FF" text-anchor="middle" font-size="12" font-weight="normal" textLength="18" lengthAdjust="spacing">129</text>
<text x="472.4" y="724" fill="#0000FF" text-anchor="middle" font-size="12" font-weight="normal" textLength="18" lengthAdjust="spacing">134</text>
<text x="498.8" y="651" fill="#0000FF" text-anchor="middle" font-size="12" font-weight="normal" textLength="18" lengthAdjust="spacing">141</text>
<text x="541.8" y="721" fill="#0000FF" text-anchor="middle" font-size="12" font-weight="normal" textLength="18" lengthAdjust="spacing">152</text>
<text x="560.7" y="711" fill="#0000FF" text-anchor="middle" font-size="12" font-weight="normal" textLength="18" lengthAdjust="spacing">157</text>
<text x="590.4" y="719" fill="#0000FF" text-anchor="middle" font-size="12" font-weight="normal" textLength="18" lengthAdjust="spacing">165</text>
<text x="610.2" y="620" fill="#0000FF" text-anchor="middle" font-size="12" font-weight="normal" textLength="18" lengthAdjust="spacing">170</text>
<text x="633.5" y="724" fill="#0000FF" text-anchor="middle" font-size="12" font-weight="normal" textLength="18" lengthAdjust="spacing">176</text>
<text x="650.3" y="724" fill="#0000FF" text-anchor="middle" font-size="12" font-weight="normal" textLength="18" lengthAdjust="spacing">181</text>
<text x="671.8" y="643" fill="#0000FF" text-anchor="middle" font-size="12" font-weight="normal" textLength="18" lengthAdjust="spacing">186</text>
<text x="691" y="724" fill="#0000FF" text-anchor="middle" font-size="12" font-weight="normal" textLength="18" lengthAdjust="spacing">191</text>
<text x="734" y="724" fill="#0000FF" text-anchor="middle" font-size="12" font-weight="normal" textLength="18" lengthAdjust="spacing">202</text>
<text x="752.4" y="724" fill="#0000FF" text-anchor="middle" font-size="12" font-weight="normal" textLength="18" lengthAdjust="spacing">207</text>
<text x="963.8" y="705" fill="#0000FF" text-anchor="middle" font-size="12" font-weight="normal" textLength="18" lengthAdjust="spacing">262</text>
</svg>
</body></html>
